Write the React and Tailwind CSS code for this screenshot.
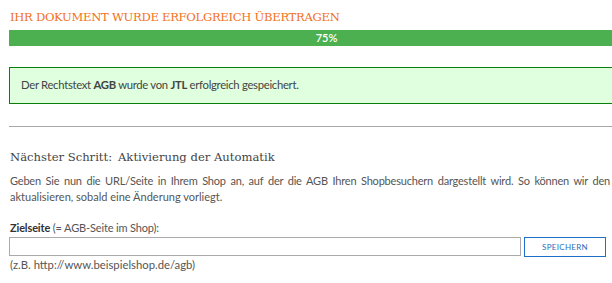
export default function App() {
  return (
    <div className="h-[283px] w-[612px] overflow-hidden bg-white">
      <div className="w-[644px] pl-[9px] pt-[8px] font-['Lato','Open_Sans',sans-serif] text-[#555]">
        <h1 className="whitespace-nowrap pl-[1px] font-['DejaVu_Serif','Liberation_Serif',serif] text-[11.6px] leading-[18px] tracking-[-0.3px] text-[#f37021]">
          IHR DOKUMENT WURDE ERFOLGREICH ÜBERTRAGEN
        </h1>

        <div className="mt-[4px] h-[16px] w-full bg-[#4caf50] text-center text-[11px] font-semibold leading-[16px] text-white">
          75%
        </div>

        <div className="mt-[21px] flex h-[37px] items-center border border-[#0a7d0a] bg-[#dfffdf] pl-[11px] text-[11.3px] tracking-[-0.3px] text-[#444]">
          <span>
            Der Rechtstext <b>AGB</b> wurde von <b>JTL</b> erfolgreich gespeichert.
          </span>
        </div>

        <hr className="mt-[22px] border-t border-[#a8a8a8]" />

        <div className="mt-[21px] flex whitespace-nowrap font-['DejaVu_Serif','Liberation_Serif',serif] text-[11.6px] leading-[18px] text-[#444]">
          <span className="w-[109px] pl-[1px]">Nächster Schritt:</span>
          <span>Aktivierung der Automatik</span>
        </div>

        <div className="mt-[7px] pl-[1px] text-[11px] leading-[15.5px]">
          <p className="w-[600px] whitespace-nowrap text-justify tracking-[-0.2px] [text-align-last:justify]">
            Geben Sie nun die URL/Seite in Ihrem Shop an, auf der die AGB Ihren Shopbesuchern dargestellt wird. So können wir den
          </p>
          <p>aktualisieren, sobald eine Änderung vorliegt.</p>
        </div>

        <label className="mt-[17px] block pl-[1px] text-[11px] leading-[14px] tracking-[-0.15px]">
          <b className="text-[#333]">Zielseite</b> (= AGB-Seite im Shop):
        </label>

        <div className="mt-[2px] flex gap-[3px]">
          <input
            type="text"
            className="h-[19px] w-[512px] border border-[#aaa] bg-white px-1 text-[11px] outline-none"
          />
          <button
            type="button"
            className="h-[20px] w-[82px] border border-[#1e6fc8] bg-white text-[8px] tracking-[0.3px] text-[#2d6fc0]"
          >
            SPEICHERN
          </button>
        </div>

        <div className="mt-[1px] pl-[1px] text-[11.3px] leading-[14px]">(z.B. http://www.beispielshop.de/agb)</div>
      </div>
    </div>
  );
}
